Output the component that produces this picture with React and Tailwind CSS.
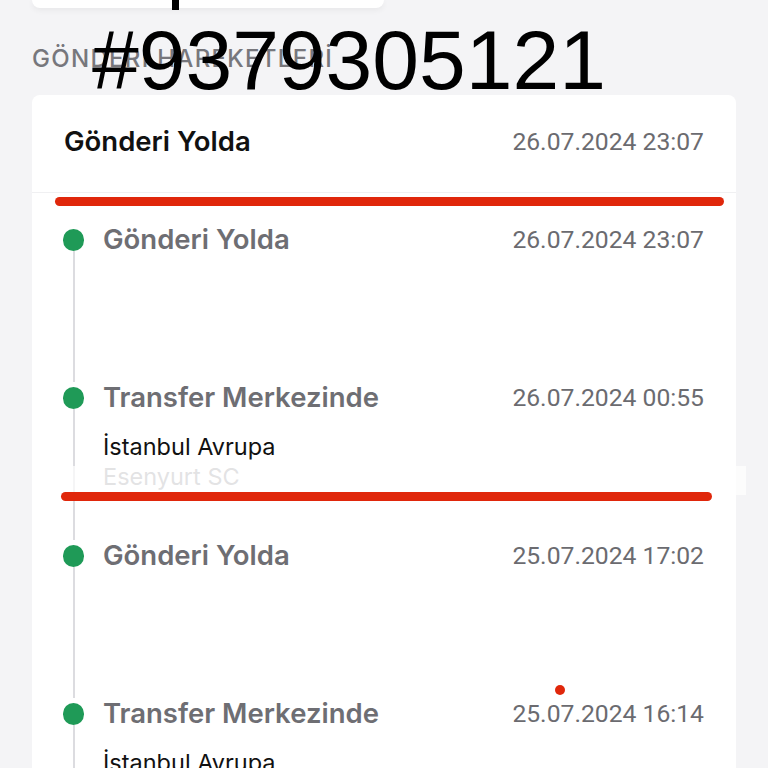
import React from "react";

const events = [
  { title: "Gönderi Yolda", date: "26.07.2024 23:07" },
  { title: "Transfer Merkezinde", date: "26.07.2024 00:55", place: "İstanbul Avrupa", sub: "Esenyurt SC" },
  { title: "Gönderi Yolda", date: "25.07.2024 17:02" },
  { title: "Transfer Merkezinde", date: "25.07.2024 16:14", place: "İstanbul Avrupa", sub: "Esenyurt SC" },
];

function TimelineItem({ title, date, place, sub }) {
  return (
    <div className="flex h-[158px] pl-[31px] pr-[32px]">
      {/* dot + rail */}
      <div className="flex w-[21px] flex-col items-center">
        <div className="mt-[5px] h-[22px] w-[21px] shrink-0 rounded-full bg-[#1f9a57]" />
        <div className="w-[2px] flex-1 bg-[#dcdce0]" />
      </div>
      <div className="ml-[19px] flex-1">
        <div className="flex h-[32px] items-center justify-between">
          <span className="font-['Inter',sans-serif] text-[27.5px] font-semibold text-[#6e6e73]">{title}</span>
          <span className="text-[24.7px] text-[#6b6b70]">{date}</span>
        </div>
        {place && (
          <div className="mt-[18px] font-['Inter',sans-serif] text-[23.5px] leading-[30px] text-[#111]">{place}</div>
        )}
        {sub && (
          <div className="font-['Inter',sans-serif] text-[23.5px] leading-[30px] text-[#a0a0a5]">{sub}</div>
        )}
      </div>
    </div>
  );
}

export default function App() {
  return (
    <div className="relative h-[768px] w-[768px] overflow-hidden bg-[#f4f4f6] font-['Roboto',sans-serif]">
      {/* previous card, cut off at the top */}
      <div className="relative ml-[32px] h-[8px] w-[352px] rounded-b-xl bg-white shadow-[0_2px_6px_rgba(0,0,0,0.06)]">
        <div className="absolute left-[140px] top-0 h-[10px] w-[7px] bg-black" />
      </div>

      <div className="flex h-[87px] items-center pl-[32px] pt-[14px] font-['Inter',sans-serif] text-[24px] font-medium tracking-[1.3px] text-[#77777c]">
        GÖNDERİ HAREKETLERİ
      </div>

      <div className="mx-[32px] rounded-lg bg-white">
        <div className="flex h-[98px] items-center justify-between border-b border-[#f0f0f2] pb-[4px] pl-[32px] pr-[32px]">
          <span className="font-['Inter',sans-serif] text-[27.5px] font-semibold text-[#111]">Gönderi Yolda</span>
          <span className="text-[24.7px] text-[#6b6b70]">26.07.2024 23:07</span>
        </div>
        <div className="pt-[31px]">
          {events.map((e, i) => (
            <TimelineItem key={i} {...e} />
          ))}
        </div>
      </div>

      {/* overlaid annotations */}
      <div className="absolute left-[92px] top-[18px] font-['Liberation_Sans',Arial,sans-serif] text-[84px] leading-none text-black">
        #9379305121
      </div>
      <div className="absolute left-[55px] top-[197px] h-[9px] w-[669px] rounded-full bg-[#e0270b]" />
      <div className="absolute left-[50px] top-[466px] h-[29px] w-[696px] bg-white/70" />
      <div className="absolute left-[61px] top-[492px] h-[9px] w-[651px] rounded-full bg-[#e0270b]" />
      <div className="absolute left-[555px] top-[685px] h-[10px] w-[10px] rounded-full bg-[#e0270b]" />
    </div>
  );
}
